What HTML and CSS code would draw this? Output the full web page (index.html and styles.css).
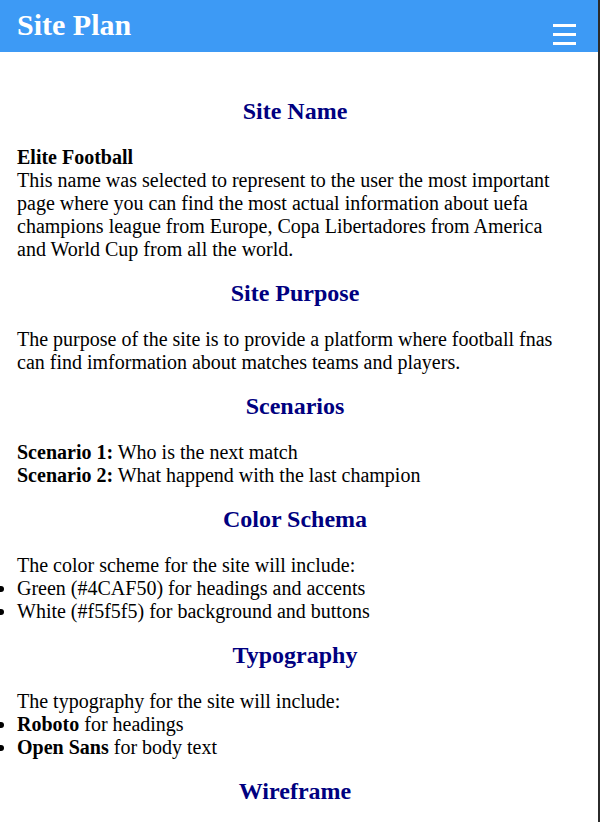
FILE: index.html
```html
<!DOCTYPE html>
<html lang="en">
<head>
<meta charset="utf-8">
<title>Site Plan</title>
<link rel="stylesheet" href="styles.css">
</head>
<body>
<header class="topbar">
  <h1 class="title">Site Plan</h1>
  <button class="menu" aria-label="Menu">
    <span class="bar"></span><span class="bar"></span><span class="bar"></span>
  </button>
</header>
<main class="content">
  <section class="block">
    <h2 class="heading">Site Name</h2>
    <p class="text"><strong>Elite Football</strong><br>This name was selected to represent to the user the most important page where you can find the most actual information about uefa champions league from Europe, Copa Libertadores from America and World Cup from all the world.</p>
  </section>
  <section class="block">
    <h2 class="heading">Site Purpose</h2>
    <p class="text">The purpose of the site is to provide a platform where football fnas can find imformation about matches teams and players.</p>
  </section>
  <section class="block">
    <h2 class="heading">Scenarios</h2>
    <p class="text"><strong>Scenario 1:</strong> Who is the next match<br><strong>Scenario 2:</strong> What happend with the last champion</p>
  </section>
  <section class="block">
    <h2 class="heading">Color Schema</h2>
    <p class="text">The color scheme for the site will include:</p>
    <ul class="list">
      <li>Green (#4CAF50) for headings and accents</li>
      <li>White (#f5f5f5) for background and buttons</li>
    </ul>
  </section>
  <section class="block">
    <h2 class="heading">Typography</h2>
    <p class="text">The typography for the site will include:</p>
    <ul class="list">
      <li><strong>Roboto</strong> for headings</li>
      <li><strong>Open Sans</strong> for body text</li>
    </ul>
  </section>
  <section class="block">
    <h2 class="heading">Wireframe</h2>
  </section>
</main>
</body>
</html>
```
FILE: styles.css
```css
html {
  background: #2b2b2b;
}
body {
  margin: 0;
  width: 598px;
  min-height: 822px;
  background: #ffffff;
  font-family: "Liberation Serif", "Times New Roman", serif;
  font-size: 20px;
  line-height: 23px;
  color: #000000;
}
.topbar {
  height: 52px;
  background: #3d9af5;
  display: flex;
  justify-content: space-between;
  padding: 0 22px 0 17px;
}
.title {
  margin: 0;
  padding-top: 8px;
  font-size: 30px;
  line-height: 34px;
  font-weight: bold;
  color: #ffffff;
}
.menu {
  align-self: flex-start;
  margin-top: 24px;
  padding: 0;
  border: 0;
  background: transparent;
  width: 23px;
  display: flex;
  flex-direction: column;
  gap: 6px;
}
.bar {
  display: block;
  height: 3px;
  background: #ffffff;
}
.content {
  padding: 45px 25px 0 17px;
}
.block {
  margin-bottom: 18px;
}
.heading {
  margin: 0 0 21px;
  font-size: 24px;
  line-height: 28px;
  text-align: center;
  color: #000080;
}
.text {
  margin: 0;
}
.list {
  margin: 0;
  padding-left: 0;
}
```
